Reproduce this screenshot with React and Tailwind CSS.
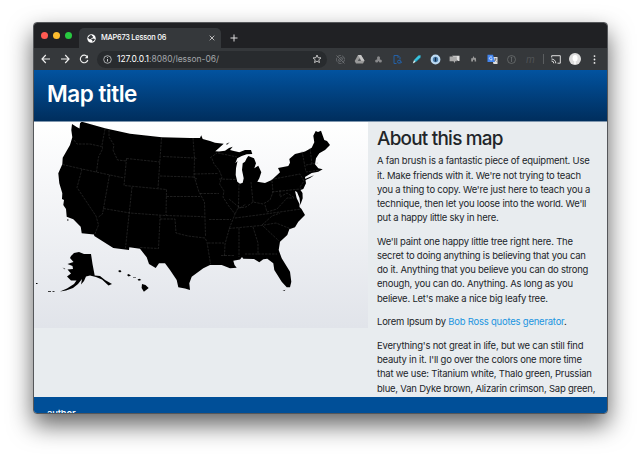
import React from "react";

const usOutline =
  "M72 124L76.7 127L79.5 128.6L80 123.3L81.7 121.7L105 128.3L130 133.7L161.7 137.3L190 137.9L200 138L201.2 135.3L202.7 139L210 141L215 142.7L223.7 143.7L219 148L215.3 151.3L219 151.5L225 150.8L229 148L232.7 146.8L230 150L235 151.2L239.3 152.3L245 150L251 150L252.3 154L246.7 154.3L241.7 156L237.3 158.3L235.3 163.3L237.5 161L236 168.3L235.7 175L237.3 181.7L240 183.7L242.7 182.7L243.7 178.3L242 170L242.7 163.3L245 161.7L246.7 158.3L248.3 156L254 158.3L256 163.3L254.3 168.3L258.3 165.7L261.3 172.3L259.3 178.3L257.3 181.7L265 183L271.7 180L280 172.3L278 168L288.3 166L290 162.7L289.3 159L295 154L305 151.5L311.7 147.7L314.3 142.3L313.3 135.7L315.7 131L318 132L321 130.8L324.3 140L327 141L330 145L325 150L319.3 153.3L316 158.3L315 164.3L318.3 168.3L322.7 169.3L318.3 171.7L311.7 173L305 177L306 183.3L303.3 189L300.5 190L302.5 193L302.7 198.3L300.3 205L299.5 198L297 192L295 191L296.7 198.3L299.5 204L299.5 207L301.5 209L305 215L298.3 221.7L295 227.3L289.3 229.3L287.3 235L280 241.7L278.7 250L281.7 258.3L290 271.7L291.3 281.7L290 287.3L286.7 287.3L281.7 281.7L274.3 270L273.3 263.3L267.3 258.7L263.3 259.3L259.3 262.3L254 259L243.3 258.7L242 257L240 259.5L233.3 260.7L234.5 265L236.7 267.7L230 268.3L221.7 265L210 265L203.3 268.3L191.7 276.7L189.3 283.3L190 290L185 288.5L178.3 287.3L176.7 280L170 270L165 263.3L159 263.3L155.7 268L149 264L146.7 257.3L140 248.7L129.3 247.3L129 250L113.3 248L94.3 236L94 234.5L81.7 233.3L80.7 226.7L73.3 219.3L66.7 216.7L66 209L63.3 205L64 200L62 199L62.3 193.3L59.3 183.3L58.3 173.3L62.3 164.3L62.7 157.7L70 145L72.3 137.3L71.3 130Z";

const alaska =
  "M71 256L74 253L79 252L84 254L91 254L92.5 264L94.7 275.5L100 276L105 280L112 284L108.5 285.5L102 279.5L96 277L90 275.5L86 276.5L84 281L81 284.5L82 279L78 284L73 288L66 290.5L60 291.5L67 288.5L74 284L76.5 280.5L71 280.5L67 276.5L71 273.5L67.5 269.5L73 269L72.5 266L67.5 264L73.5 262L70 258Z";

const stateLines = [
  "M74 140L77 144L90 144L101.5 146.5M105 129L102 145L102.5 149L98.5 157L96.5 172M62.5 164.5L82 169L110 175L124 178M109 130L109 137L114 145L113 150L117.5 160L126.5 161M126.5 158.5L160 162M161.5 138L158 188M126.5 158.5L124 185.5L166.5 189.5M82 169L77 187.5L96 216L98.5 225L94.5 235M109.5 175L102.5 214L98.5 217M103.5 208.5L130 213L165 215.5L199 216.5L205 217M132 187L125.5 248M166.5 189.5L166 215.5M163 156.5L194.5 158M160 176L193 177L197 179M193 138L194.5 158L194 176M166.5 196.5L200 196.5M194 174L218 173.5M194 176L199 192L204.5 202L205.5 236M194 158L197 158.5M212 158.5L214 164L219 170L222 177L219.5 184L224 191L223 197L228 205L235 214L229.5 228L225 244L224.5 256M219 179L236 179.5M239 184L238.5 207L235 214M251 182L253 202M238 208L246 207L253 202L263 204L270 200L273 192L272 181M200 193.5L219 193.5M160 215.5L160 219L175 219L176 233L188 236L205 238L207 242L210.5 264",
  "M160 219L158.5 248.5L139.5 247.5M209 219.5L231 219.5M208 243L224 243M221 255.5L234 255.5M239 228L239 257M253 227L258 243L258 254L245 254M258 254L277 254M229 228.5L261 225.5L276 223L291 229M235 218L262 214.5L301 209M262 225L272 216L280 213M263 226L279 241M229 199L240 208L246 204M265 205L267 212L277 209L287 198L294 198M271 179.5L300 174L304 181L300 187L302 191M272 192L300 189M280 190L280 197L287 193L295 198M302 151L306 172L320 170M310 148L312 164M306 165L318 163M210 158L217 153M218 153L237 157",
];

function UsMap() {
  return (
    <svg viewBox="34 121 334 207" className="block h-[207px] w-[334px]" role="img" aria-label="United States">
      <g fill="black">
        <path d={usOutline} />
        <path d={alaska} />
        <path d="M305 179L314 175.2L310 178L304.5 180.5Z" />
        <path d="M226 144L229.7 142.2L227 144.8ZM320 172.5l1.5-.5M62 267l3 1M282.5 291l3-1.2l-1 1.3ZM67 219.5h1.5v1h-1.5Z" />
        <path d="M118 271l2-1 1.5 1.2-1.5 1.3zM127 275l1.5-1 2.5 1.6-2.4.8zM133 277.2l3 .2v.7l-3-.3zM137.5 279.5l2-.7 1.8 1.3-2.5.7zM142 284l3.5 1 3.2 3-4.8 3.7-2.3-3.7z" />
        <path d="M36 283h1.5v1H36zM48 291.3l3-.2v.7l-3 .2zM52.5 291.3h2v.7h-2zM62.5 267.4l3 1.5-1 .3z" />
      </g>
      {stateLines.map((d) => (
        <path key={d} d={d} fill="none" stroke="#666" strokeWidth=".3" strokeDasharray="2.5 1" />
      ))}
    </svg>
  );
}

const iconBox = "size-[11px] shrink-0";

function Extensions() {
  return (
    <div className="flex items-center gap-[8px]">
      <svg className={iconBox} viewBox="0 0 11 11" fill="none" stroke="#73767a" strokeWidth=".8">
        <circle cx="5.5" cy="5.5" r="4" strokeDasharray="4 1" />
        <path d="M1.5 1.5l8 8M5 3.8h2.2v2.4M3.8 5v2.2h2.2" />
      </svg>
      <svg className={iconBox} viewBox="0 0 11 11">
        <path d="M4 1h3l3.5 5.8L9 9.5H2L.7 7z" fill="#999" />
        <path d="M4 1h3l3.5 5.8H7.4z" fill="#c6c6c6" />
        <path d="M5.4 4.2L7 7H3.8z" fill="#55585b" />
      </svg>
      <svg className={iconBox} viewBox="0 0 11 11" fill="#88898b">
        <circle cx="5.5" cy="3.7" r="1.5" />
        <circle cx="3.7" cy="7" r="1.6" />
        <circle cx="7.3" cy="7" r="1.6" />
        <path d="M4.6 4h1.8l1 3H3.5z" />
      </svg>
      <svg className={iconBox} viewBox="0 0 11 11" fill="none" stroke="#2560a5" strokeWidth="1">
        <path d="M4.5 9.5H2v-8h4l2 2v2M6 1.5V4" />
        <circle cx="7" cy="7.7" r="1.5" />
        <path d="M8 6.5L9.7 8 8.2 9.5" />
      </svg>
      <svg className={iconBox} viewBox="0 0 11 11">
        <path d="M9.6 1.2L7.4 1.6 3 6l1.5 2 5-4.4z" fill="#39c3df" />
        <path d="M3 6l1.5 2-2.7 1.6z" fill="#d9f4f5" />
        <path d="M5.2 7.4l4.4-3.7" stroke="#147d9b" />
      </svg>
      <svg className={iconBox} viewBox="0 0 11 11">
        <circle cx="5.5" cy="5.5" r="3.8" fill="#4c7fae" stroke="#bbd9f2" strokeWidth="2.2" />
        <path d="M5.5 3.6v3.8" stroke="#142c46" strokeWidth="1.3" />
      </svg>
      <svg className={iconBox} viewBox="0 0 11 11">
        <path d="M3 1.7h7.5v5.2H9z" fill="#ddd" />
        <path d="M.6 2.5h7.2v4.7H6v2L4.5 7.2H.6z" fill="#aaa" />
      </svg>
      <svg className={iconBox} viewBox="0 0 11 11">
        <path d="M5.5 2l1 2 1.3-.2.4 3.6H6.6V5.7H5v1.7H3.2V4.2h1.3z" fill="#999" />
      </svg>
      <svg className={iconBox} viewBox="0 0 11 11">
        <path d="M4.5 3h6v7h-4z" fill="#ddd" />
        <path d="M.5.8H6l2 7.2H.5z" fill="#4385ef" />
        <path d="M5 3.3a1.5 1.5 0 10.3 1.8H4" fill="none" stroke="#fff" strokeWidth=".7" />
        <path d="M7.3 5h2.6M8.6 4v1.2l-1.2 2M8 6l1.8 1.7" stroke="#777" strokeWidth=".6" />
      </svg>
      <svg className={iconBox} viewBox="0 0 11 11" fill="none" stroke="#6b6e70" strokeWidth=".8">
        <circle cx="5.5" cy="5.5" r="4" />
        <path d="M5.5 3v5M4.7 3.3h1.6" />
      </svg>
      <span className="w-[11px] text-center font-['Inter',sans-serif] text-[10px] italic leading-none text-[#505356]">m</span>
    </div>
  );
}

function Browser() {
  return (
    <>
      <div className="flex h-[25px] items-end bg-[#202124]">
        <div className="flex h-full w-[45px] items-center gap-[5px] pl-[7px]">
          <i className="size-[7px] rounded-full bg-[#ff5b52]" />
          <i className="size-[7px] rounded-full bg-[#fdbc2e]" />
          <i className="size-[7px] rounded-full bg-[#28c840]" />
        </div>
        <div className="flex h-[20px] w-[142px] items-center rounded-t-[5px] bg-[#35383b] pl-[8px] pr-[6px] text-white">
          <svg className="size-[9px]" viewBox="0 0 10 10">
            <circle cx="5" cy="5" r="4.7" fill="white" />
            <path d="M3.4 1.5L5.3 1l.2 1.2 1.4.6-.5 1.3-1.6.4.2 1.1-2.3.2L1 4.3zM6.7 5l2.2.5-1.1 2.1-2 .9.2-1.3L4.4 6z" fill="#35383b" />
          </svg>
          <span className="ml-[5px] whitespace-nowrap text-[7.45px] font-medium tracking-[-0.25px]">
            <span className="tracking-[-0.28px]">MAP673</span> Lesson 06
          </span>
          <svg className="ml-auto size-[6px]" viewBox="0 0 6 6" stroke="#ccc" strokeWidth=".9">
            <path d="M.7.7l4.6 4.6M5.3.7L.7 5.3" />
          </svg>
        </div>
        <svg className="mb-[6px] ml-[9px] size-[8px]" viewBox="0 0 8 8" stroke="#ddd" strokeWidth="1">
          <path d="M4 .5v7M.5 4h7" />
        </svg>
      </div>
      <div className="flex h-[22px] items-center bg-[#35383b] pl-[7px] pr-[11px]">
        <svg className="h-[10px] w-[48px] shrink-0" viewBox="0 0 48 10" fill="none" stroke="#eee" strokeWidth="1.15">
          <path d="M9 5H1M4.8 1L1 5l3.8 4M20 5h8M24.2 1L28 5l-3.8 4M46.4 3A3.8 3.8 0 1046.8 6" />
          <path d="M47 1v3.2h-3.2z" fill="#eee" stroke="none" />
        </svg>
        <div className="ml-[8px] flex h-[17px] w-[230px] shrink-0 items-center rounded-full bg-[#282b2e] pl-[6px] pr-[5px]">
          <svg className="size-[9px]" viewBox="0 0 9 9" fill="none" stroke="#c9cbcd" strokeWidth=".8">
            <circle cx="4.5" cy="4.5" r="3.8" />
            <path d="M4.5 4v2.5M4.5 2.2V3" strokeWidth="1" />
          </svg>
          <span className="ml-[5px] whitespace-nowrap text-[8.5px] tracking-[-0.03px] text-[#a2a5a9]">
            <span className="text-white">127.0.0.1</span>:8080/lesson-06/
          </span>
          <svg className="ml-auto size-[10px]" viewBox="0 0 10 10" fill="none" stroke="#cfcfcf" strokeWidth=".9">
            <path d="M5 1l1.1 2.7 2.9.2-2.2 1.9.7 2.8L5 7.1 2.5 8.6l.7-2.8L1 3.9l2.9-.2z" />
          </svg>
        </div>
        <div className="ml-[8px]"><Extensions /></div>
        <i className="ml-[7px] h-[10px] w-px bg-[#5b5e60]" />
        <svg className="ml-[7px] h-[9px] w-[10px] shrink-0" viewBox="0 0 10 9" fill="none" stroke="#ddd" strokeWidth="1">
          <path d="M.7 2.5V.7h8.6v7.5H6.5M.5 4a4.3 4.3 0 014.3 4.3M.5 6a2.3 2.3 0 012.3 2.3" />
        </svg>
        <svg className="ml-[8px] size-[12px] shrink-0" viewBox="0 0 12 12">
          <circle cx="6" cy="6" r="6" fill="#ddd" />
          <ellipse cx="6.1" cy="5.3" rx="2.5" ry="3.2" fill="white" />
          <path d="M5 8h2v3H5z" fill="#f5f5f5" />
        </svg>
        <svg className="ml-auto h-[9px] w-[3px] shrink-0" viewBox="0 0 3 9" fill="#eee">
          <circle cx="1.5" cy="1.1" r=".9" />
          <circle cx="1.5" cy="4.5" r=".9" />
          <circle cx="1.5" cy="7.9" r=".9" />
        </svg>
      </div>
    </>
  );
}

export default function App() {
  return (
    <div className="h-[457px] w-[640px] overflow-hidden bg-white pl-[33px] pt-[22px] font-['Inter','Liberation_Sans',sans-serif]">
      <div className="flex h-[392px] w-[575px] flex-col overflow-hidden rounded-[4px] border border-[#55575a] bg-[#e8ecef] shadow-[0_11px_24px_rgba(0,0,0,0.62)]">
        <Browser />
        <header className="h-[52px] shrink-0 border-b border-[#7f96ae] bg-linear-to-b from-[#0253a0] to-[#002e5d] pl-[13px] pt-[9px]">
          <h1 className="whitespace-nowrap text-[22.5px] font-semibold leading-[30px] tracking-[-0.5px] text-white">Map title</h1>
        </header>
        <main className="flex h-[275px] shrink-0 overflow-hidden">
          <div className="h-[206px] w-[334px] shrink-0 bg-linear-to-b from-white to-[#e1e4ea]">
            <div className="-mt-px">
              <UsMap />
            </div>
          </div>
          <article className="pl-[9px] pt-[5.6px] text-[9.47px] leading-[14.2px] tracking-[-0.21px] text-[#212529]">
            <h2 className="mb-[4px] whitespace-nowrap text-[18.9px] font-medium leading-[22.7px] tracking-[-0.75px]">About this map</h2>
            <p className="mb-[9.5px] whitespace-nowrap">
              A fan brush is a fantastic piece of equipment. Use<br />
              it. Make friends with it. We're not trying to teach<br />
              you a thing to copy. We're just here to teach you a<br />
              technique, then let you loose into the world. We'll<br />
              put a happy little sky in here.
            </p>
            <p className="mb-[9.5px] whitespace-nowrap">
              We'll paint one happy little tree right here. The<br />
              secret to doing anything is believing that you can<br />
              do it. Anything that you believe you can do strong<br />
              enough, you can do. Anything. As long as you<br />
              believe. Let's make a nice big leafy tree.
            </p>
            <p className="mb-[9.5px] whitespace-nowrap">
              Lorem Ipsum by <a className="text-[#1b95e0]">Bob Ross quotes generator</a>.
            </p>
            <p className="whitespace-nowrap">
              Everything's not great in life, but we can still find<br />
              beauty in it. I'll go over the colors one more time<br />
              that we use: Titanium white, Thalo green, Prussian<br />
              blue, Van Dyke brown, Alizarin crimson, Sap green,
            </p>
          </article>
        </main>
        <footer className="h-[16px] shrink-0 overflow-hidden bg-[#004f98] pl-[13px] pt-[10px] text-[9.47px] font-medium leading-[14.2px] tracking-[-0.15px] text-white">author</footer>
      </div>
    </div>
  );
}
